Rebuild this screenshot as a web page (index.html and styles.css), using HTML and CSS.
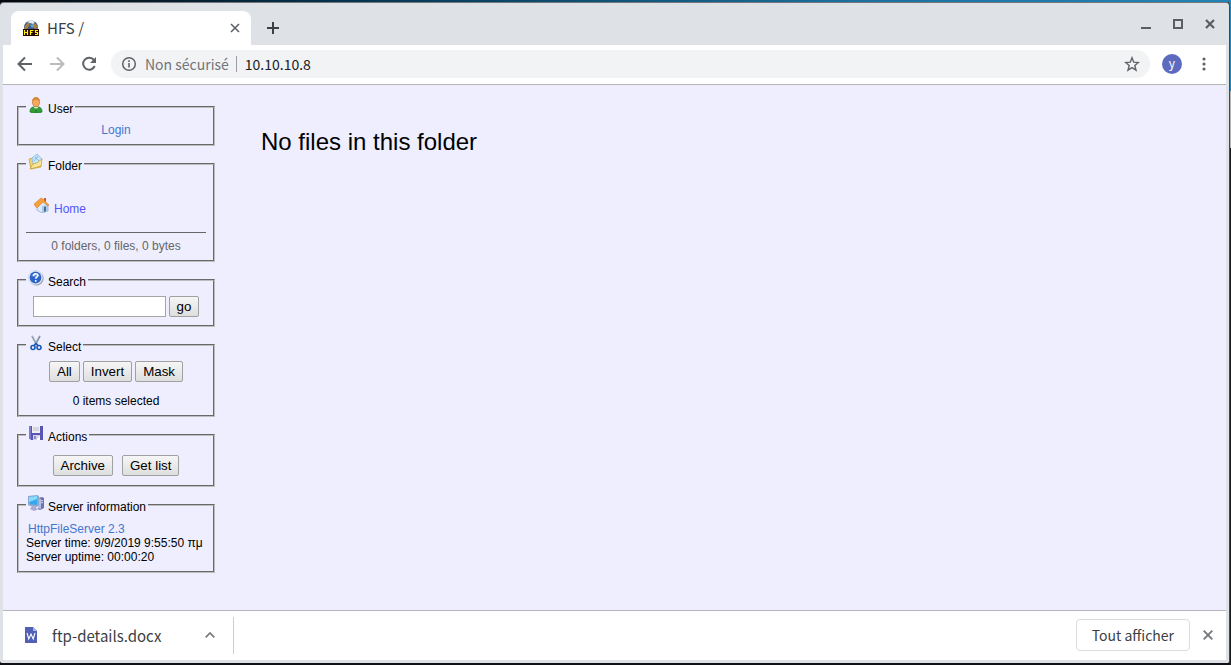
FILE: index.html
```html
<!DOCTYPE html>
<html lang="fr">
<head>
<meta charset="utf-8">
<meta name="viewport" content="width=device-width, initial-scale=1">
<title>HFS /</title>
<link rel="stylesheet" href="styles.css">
</head>
<body>
<div class="window">
  <header class="tabstrip">
    <div class="tab">
      <svg class="favicon" width="16" height="16" viewBox="0 0 16 16" aria-hidden="true">
        <circle cx="8" cy="7.500" r="7" fill="#315f91"/>
        <path d="M2 6l3-4 2 1-1 3-2 3H1zM10 3l3 1 2 4-3 1-2-2z" fill="#a58242"/>
        <path d="M4 2l4-2 4 2-2 2-3-1z" fill="#e4eef4"/>
        <path d="M7 5l3-1 1 2-2 2z" fill="#6aa0c7"/>
        <path d="M0 9h16v7H0z" fill="#240400"/>
        <path d="M1.500 10v5M4.500 10v5M1.500 12.500h3M7.500 15v-4.500h3M7.500 12.500h2M15 10.500h-2.500v2h2v2H12" fill="none" stroke="#fff200" stroke-width="1.200"/>
      </svg>
      <span class="tab-title">HFS /</span>
      <button class="plain tab-close" type="button" aria-label="Fermer l'onglet"><svg width="10" height="10" viewBox="0 0 10 10"><path d="M1 1l8 8M9 1l-8 8" stroke="#5f6368" stroke-width="1.600"/></svg></button>
    </div>
    <button class="plain new-tab" type="button" aria-label="Nouvel onglet"><svg width="12" height="12" viewBox="0 0 12 12"><path d="M6 0v12M0 6h12" stroke="#3c4043" stroke-width="2"/></svg></button>
    <div class="controls">
      <button class="plain" type="button" aria-label="Réduire"><svg width="10" height="10" viewBox="0 0 10 10"><path d="M0 9h10" stroke="#5a5d61" stroke-width="2"/></svg></button>
      <button class="plain" type="button" aria-label="Agrandir"><svg width="10" height="10" viewBox="0 0 10 10"><path d="M1 1h8v8H1z" fill="none" stroke="#5a5d61" stroke-width="2"/></svg></button>
      <button class="plain" type="button" aria-label="Fermer"><svg width="10" height="10" viewBox="0 0 10 10"><path d="M1 1l8 8M9 1l-8 8" stroke="#5a5d61" stroke-width="2.200"/></svg></button>
    </div>
  </header>

  <div class="toolbar">
    <button class="plain nav" type="button" aria-label="Précédent"><svg width="16" height="16" viewBox="0 0 16 16"><path d="M15 8H2M8 1.500L1.500 8 8 14.500" fill="none" stroke="#5f6368" stroke-width="2"/></svg></button>
    <button class="plain nav" type="button" aria-label="Suivant"><svg width="16" height="16" viewBox="0 0 16 16"><path d="M1 8h13M8 1.500L14.500 8 8 14.500" fill="none" stroke="#bababc" stroke-width="2"/></svg></button>
    <button class="plain nav" type="button" aria-label="Actualiser"><svg width="16" height="16" viewBox="0 0 16 16"><path d="M13 4.200A6 6 0 1 0 13.700 10" fill="none" stroke="#5f6368" stroke-width="2"/><path d="M15 1v6H9z" fill="#5f6368"/></svg></button>
    <div class="omnibox">
      <svg width="16" height="16" viewBox="0 0 16 16" aria-hidden="true"><circle cx="8" cy="8" r="6.300" fill="none" stroke="#5f6368" stroke-width="1.500"/><path d="M8 7v4.500M8 4.300v1.600" stroke="#5f6368" stroke-width="1.600"/></svg>
      <label class="security" for="address">Non sécurisé</label>
      <input class="address" id="address" type="text" value="10.10.10.8">
      <button class="plain" type="button" aria-label="Ajouter aux favoris"><svg width="16" height="16" viewBox="0 0 16 16"><path d="M8 1.800l1.700 4.400 4.700.3-3.600 3 1.200 4.600L8 11.600l-4 2.500 1.200-4.600-3.600-3 4.700-.3z" fill="none" stroke="#5f6368" stroke-width="1.400"/></svg></button>
    </div>
    <button class="plain avatar" type="button" aria-label="Profil y">y</button>
    <button class="plain menu" type="button" aria-label="Menu"><svg width="4" height="14" viewBox="0 0 4 14"><g fill="#5f6368"><circle cx="2" cy="2" r="1.600"/><circle cx="2" cy="7" r="1.600"/><circle cx="2" cy="12" r="1.600"/></g></svg></button>
  </div>

  <div class="page">
    <aside class="panel">
      <fieldset class="box user">
        <legend class="legend">
          <svg width="16" height="16" viewBox="0 0 16 16" aria-hidden="true"><path d="M2 15c0-4 2-5 4-5h4c2 0 4 1 4 5-3 1.300-9 1.300-12 0z" fill="#2f9e34" stroke="#16751f" stroke-width=".7"/><path d="M6 10l2 4 2-4z" fill="#f3f7e8"/><path d="M7.500 11h1l.5 3-1 1-1-1z" fill="#1f7b28"/><ellipse cx="8" cy="5" rx="3.700" ry="4.800" fill="#f5a95a" stroke="#b46a20" stroke-width=".6"/><path d="M4.200 4.500C4-1 12-1 11.800 4.500 10 2.500 6 2.500 4.200 4.500z" fill="#d98a38"/></svg>
          User
        </legend>
        <a class="login" href="#login">Login</a>
      </fieldset>

      <fieldset class="box folder">
        <legend class="legend">
          <svg width="16" height="16" viewBox="0 0 16 16" aria-hidden="true"><path d="M1 5l4-1 2 2 5-1 1 8-10 2z" fill="#f3d36b" stroke="#c69b31" stroke-width=".7"/><path d="M4 4l5-4 5 5-3 6-6-1z" fill="#c4e4f8" stroke="#7fb3d7" stroke-width=".7"/><path d="M7 3l4 4M10 2l-4 5" stroke="#82bce5"/><path d="M2 15l3-5 4-1 5-4-1 7z" fill="#fae79a" stroke="#c69b31" stroke-width=".7"/></svg>
          Folder
        </legend>
        <a class="home" href="#home">
          <svg width="16" height="16" viewBox="0 0 16 16" aria-hidden="true"><path d="M3 7l5-4 6 5v6l-6 2-5-3z" fill="#d9ebfa" stroke="#83a6c7" stroke-width=".7"/><path d="M8 9l6-1v6l-6 2z" fill="#a8c9e8"/><path d="M10 10l2-.4v4.600l-2 .6z" fill="#486c97"/><path d="M10 1h2v5h-2z" fill="#cf5636"/><path d="M1 9L0 7l7-6 2 1 6 6-1 1-5-4-6 6z" fill="#f4a03b" stroke="#d77921" stroke-width=".5"/></svg>
          Home
        </a>
        <hr class="rule">
        <p class="stats">0 folders, 0 files, 0 bytes</p>
      </fieldset>

      <fieldset class="box search">
        <legend class="legend">
          <svg width="16" height="16" viewBox="0 0 16 16" aria-hidden="true"><circle cx="8.500" cy="8.500" r="7.200" fill="#a5a8b1"/><circle cx="7.500" cy="7.500" r="7" fill="#f3f7fc" stroke="#b8c8df" stroke-width=".6"/><circle cx="7.500" cy="7.500" r="5.900" fill="#2b63c9"/><path d="M3 6a5 4 0 0 1 9 0q-4 2-9 0z" fill="#5f91e3"/><path d="M5.500 6c0-3 4.300-2.800 4.300-.5 0 1.500-2.100 1.600-2.100 3.200M7.700 10v1.700" fill="none" stroke="#fff" stroke-width="1.600"/></svg>
          Search
        </legend>
        <div class="row">
          <input class="query" type="text" aria-label="Search">
          <button class="btn" type="submit">go</button>
        </div>
      </fieldset>

      <fieldset class="box select">
        <legend class="legend">
          <svg width="16" height="16" viewBox="0 0 16 16" aria-hidden="true"><path d="M4 1l5 9M12 1l-5 9" stroke="#8494a4" stroke-width="1.700"/><path d="M4.500 1l4 7" stroke="#d1dae2" stroke-width=".6"/><g fill="none" stroke="#1758b4" stroke-width="1.600"><circle cx="5" cy="12.500" r="2"/><circle cx="11" cy="12.500" r="2"/><path d="M6 10.500l2-2 2 2"/></g></svg>
          Select
        </legend>
        <div class="row">
          <button class="btn" type="button">All</button>
          <button class="btn" type="button">Invert</button>
          <button class="btn" type="button">Mask</button>
        </div>
        <p class="count">0 items selected</p>
      </fieldset>

      <fieldset class="box actions">
        <legend class="legend">
          <svg width="16" height="16" viewBox="0 0 16 16" aria-hidden="true"><path d="M1 1h14v14H3l-2-2z" fill="#5754b5"/><path d="M1 1h2v13H1z" fill="#7e7bd0"/><path d="M4 1h8v7H4z" fill="#eeeef4"/><path d="M5 3h6M5 5h6" stroke="#bdbdc6"/><path d="M5 10h7v5H5z" fill="#d3d5e7"/><path d="M6 11h2v3H6z" fill="#8b89c4"/><path d="M9 14l3-3v4H9z" fill="#fff"/></svg>
          Actions
        </legend>
        <div class="row wide">
          <button class="btn" type="button">Archive</button>
          <button class="btn" type="button">Get list</button>
        </div>
      </fieldset>

      <fieldset class="box server">
        <legend class="legend">
          <svg width="16" height="16" viewBox="0 0 16 16" aria-hidden="true"><path d="M10 3l4-1 2 1v10l-4 2-2-1z" fill="#6b73b3"/><path d="M10 3l3 1v10l-3-1z" fill="#b6bce0"/><path d="M13 6l2-.5M13 8l2-.5" stroke="#d5daf3"/><path d="M0 1l9-1 2 1v9l-2 2-7-1-2-1z" fill="#8ba8d0"/><path d="M1 2l8-1v9l-7-1z" fill="#35a9ed"/><path d="M1 2l8-1v3L1 7z" fill="#8bd9fb"/><path d="M4 11l4 1v1l3 1-5 2-4-2z" fill="#aaa9ce"/></svg>
          Server information
        </legend>
        <a class="product" href="#hfs">HttpFileServer 2.3</a>
        <p class="info">Server time: 9/9/2019 9:55:50 πμ</p>
        <p class="info">Server uptime: 00:00:20</p>
      </fieldset>
    </aside>
    <main class="files">
      <h1 class="empty">No files in this folder</h1>
    </main>
  </div>

  <footer class="shelf">
    <button class="plain download" type="button">
      <svg width="12" height="16" viewBox="0 0 12 16" aria-hidden="true"><path d="M0 0h8l4 4v12H0z" fill="#4f60b5"/><path d="M8 0l4 4H8z" fill="#a9b3dd"/><path d="M2 6l1.800 6L6 7l2.200 5L10 6" fill="none" stroke="#fff" stroke-width="1.100"/></svg>
      <span class="filename">ftp-details.docx</span>
      <svg width="10" height="6" viewBox="0 0 10 6" aria-hidden="true"><path d="M.7 5.300L5 1l4.300 4.300" fill="none" stroke="#75787c" stroke-width="1.700"/></svg>
    </button>
    <button class="show-all" type="button">Tout afficher</button>
    <button class="plain" type="button" aria-label="Fermer la barre"><svg width="10" height="10" viewBox="0 0 10 10"><path d="M.7.7l8.600 8.600M9.300.7L.7 9.300" stroke="#75787c" stroke-width="1.900"/></svg></button>
  </footer>
</div>
</body>
</html>
```

FILE: styles.css
```css
* { box-sizing: border-box; }

body {
  margin: 0;
  min-height: 100vh;
  display: flex;
  padding: 2px 1px 2px 0;
  background:
    linear-gradient(90deg, #05080d, #063653 30%, #1c719f 70%, #2283b6) top / 100% 2px no-repeat,
    linear-gradient(#2387bd 91px, #b5b5b5 91px, #b5b5b5 148px, #16181c 148px) right / 2px 100% no-repeat,
    #101116;
}

.window {
  flex: 1;
  display: flex;
  flex-direction: column;
  background: #dee1e6;
  border-top: 1px solid #73777b;
  border-right: 1px solid #45494d;
  border-radius: 4px 4px 2px 2px;
  padding: 0 3px 3px 3px;
  font-family: "Noto Sans CJK JP", "Noto Sans", sans-serif;
  color: #3c4043;
}

.plain {
  display: flex;
  align-items: center;
  justify-content: center;
  border: 0;
  padding: 0;
  background: none;
  font-family: inherit;
  color: inherit;
}

.tabstrip {
  display: flex;
  align-items: center;
  height: 42px;
  padding: 8px 11px 0 8px;
}

.tab {
  display: flex;
  align-items: center;
  width: 240px;
  height: 34px;
  padding: 0 11px 0 12px;
  background: #fff;
  border-radius: 8px 8px 0 0;
}

.tab-title {
  flex: 1;
  padding-left: 8px;
  font-size: 15px;
  line-height: 20px;
}

.new-tab { margin-left: 16px; }

.controls {
  display: flex;
  gap: 22px;
  margin: 0 0 8px auto;
}

.toolbar {
  display: flex;
  align-items: center;
  height: 40px;
  padding: 0 20px 1px 14px;
  background: #fff;
  border-bottom: 1px solid #b5b5b7;
}

.nav { margin-right: 16px; }

.omnibox {
  flex: 1;
  display: flex;
  align-items: center;
  height: 28px;
  margin-right: 12px;
  margin-left: -2px;
  padding: 0 10px;
  border-radius: 14px;
  background: #f1f3f4;
  font-size: 14px;
}

.security {
  margin-left: 8px;
  padding-right: 7px;
  border-right: 1px solid #9a9da1;
  line-height: 16px;
  color: #717579;
}

.address {
  flex: 1;
  min-width: 0;
  border: 0;
  padding: 0 8px;
  background: none;
  font: inherit;
  color: #202124;
}

.avatar {
  width: 20px;
  height: 20px;
  margin-right: 20px;
  border-radius: 50%;
  background: #5c6bc0;
  color: #fff;
  font-size: 12px;
  line-height: 16px;
  padding-bottom: 2px;
}

.page {
  flex: 1;
  display: flex;
  background: #eeeeff;
  color: #000;
  font-family: "Liberation Sans", Arial, sans-serif;
  font-size: 12px;
  line-height: 14px;
}

.panel {
  display: flex;
  flex-direction: column;
  gap: 8px;
  width: 198px;
  margin: 12px 0 12px 14px;
}

.box {
  min-width: 0;
  margin: 0;
  padding: 7px;
  border: 2px groove #bdbdbd;
}

.legend {
  display: flex;
  align-items: flex-end;
  gap: 4px;
  height: 19px;
  padding: 0 2px;
}

.legend svg { align-self: flex-start; }

.page a { text-decoration: none; color: #4477cc; }

.page p { margin: 0; }

.login { display: block; text-align: center; }

.folder { padding-top: 24px; }

.page .home {
  display: flex;
  align-items: flex-end;
  gap: 4px;
  height: 19px;
  padding-left: 8px;
  color: #5555ff;
}

.home svg { align-self: flex-start; }

.rule {
  margin: 16px 0 6px;
  border: 0;
  border-top: 1px solid #666;
}

.stats { text-align: center; color: #666; }

.row {
  display: flex;
  justify-content: center;
  gap: 3px;
}

.wide { gap: 9px; }

.search { padding-bottom: 8px; }

.query {
  width: 133px;
  height: 21px;
  border: 1px solid #a5a5a5;
  padding: 1px 3px;
  background: #fff;
}

.btn {
  height: 21px;
  padding: 0 7px;
  border: 1px solid #a0a0a0;
  border-radius: 2px;
  background: linear-gradient(#f6f6f6, #dedede);
  color: #000;
  font-family: inherit;
}

.count { padding-top: 12px; text-align: center; }

.actions { padding-top: 11px; padding-bottom: 9px; }

.server { padding-top: 8px; }

.product { display: block; padding-left: 2px; }

.info { white-space: nowrap; }

.files { flex: 1; padding: 43px 16px 0 46px; }

.empty {
  margin: 0;
  font-size: 24px;
  font-weight: 400;
  line-height: 28px;
}

.shelf {
  display: flex;
  align-items: center;
  height: 50px;
  padding: 0 13px 1px 0;
  background: #fff;
  border-top: 1px solid #b5b5bb;
}

.download {
  width: 231px;
  height: 37px;
  padding: 0 18px 0 22px;
  border-right: 1px solid #cdcdcf;
  font-size: 15px;
}

.filename { flex: 1; padding-left: 15px; text-align: left; }

.show-all {
  height: 32px;
  margin: 0 13px 0 auto;
  padding: 0 15px;
  border: 1px solid #dadce0;
  border-radius: 4px;
  background: #fff;
  color: #3c4043;
  font-family: inherit;
  font-size: 14px;
  line-height: 20px;
}
```
